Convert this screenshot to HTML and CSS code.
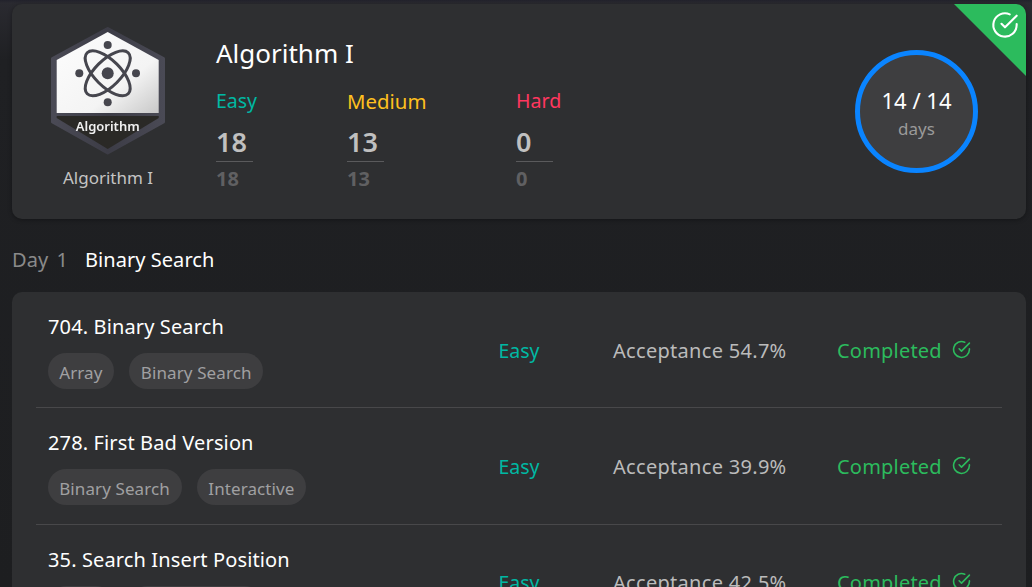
FILE: index.html
```html
<!DOCTYPE html>
<html lang="en">
<head>
<meta charset="utf-8">
<title>Algorithm I</title>
<link rel="stylesheet" href="styles.css">
</head>
<body>
<main class="page">
  <section class="hero">
    <div class="corner">
      <svg class="corner-check" viewBox="0 0 24 24"><path d="M22 11.08V12a10 10 0 1 1-5.93-9.14"/><path d="M22 4 12 14.01l-3-3"/></svg>
    </div>
    <div class="badge-col">
      <svg class="badge" viewBox="0 0 116 130">
        <defs>
          <linearGradient id="face" x1="0" y1="0" x2="1" y2="1"><stop offset="0" stop-color="#fdfdfd"/><stop offset="0.65" stop-color="#f4f4f4"/><stop offset="1" stop-color="#c8c8c8"/></linearGradient>
          <linearGradient id="rim" x1="0" y1="0" x2="1" y2="0"><stop offset="0" stop-color="#4a4a55"/><stop offset="0.5" stop-color="#3c3c46"/><stop offset="1" stop-color="#4a4a55"/></linearGradient>
        </defs>
        <path class="badge-rim" fill="url(#rim)" stroke="url(#rim)" d="M57.7 2.5 113.5 32.5v63.5L57.7 127 2.5 96V32.5z"/>
        <path class="badge-face" fill="url(#face)" d="M57.7 6 108.7 34v53H6.7V34z"/>
        <path class="badge-foot" d="M6.7 90h102v2L57.7 123 6.7 92z"/>
        <g class="atom">
          <ellipse cx="57.7" cy="47.3" rx="29" ry="13" transform="rotate(45 57.7 47.3)"/>
          <ellipse cx="57.7" cy="47.3" rx="29" ry="13" transform="rotate(-45 57.7 47.3)"/>
        </g>
        <g class="atom-dots">
          <circle cx="57.7" cy="47.3" r="6"/><circle cx="57.7" cy="19" r="4"/><circle cx="57.7" cy="76.3" r="4"/><circle cx="29.3" cy="47.3" r="4"/><circle cx="86" cy="47.3" r="4"/>
        </g>
        <text class="badge-text" x="57.7" y="105" text-anchor="middle">Algorithm</text>
      </svg>
      <div class="badge-name">Algorithm I</div>
    </div>
    <div class="summary">
      <h1 class="plan-title">Algorithm I</h1>
      <div class="levels">
        <div class="level">
          <div class="level-name easy">Easy</div>
          <div class="level-done">18</div>
          <div class="level-total">18</div>
        </div>
        <div class="level">
          <div class="level-name medium">Medium</div>
          <div class="level-done">13</div>
          <div class="level-total">13</div>
        </div>
        <div class="level">
          <div class="level-name hard">Hard</div>
          <div class="level-done">0</div>
          <div class="level-total">0</div>
        </div>
      </div>
    </div>
    <div class="ring">
      <div class="ring-count">14 / 14</div>
      <div class="ring-unit">days</div>
    </div>
  </section>

  <h2 class="day"><span class="day-num">Day 1</span><span class="day-topic">Binary Search</span></h2>

  <section class="list">
    <article class="row">
      <div class="row-main">
        <div class="row-title">704. Binary Search</div>
        <div class="tags"><span class="tag">Array</span><span class="tag">Binary Search</span></div>
      </div>
      <div class="row-level">Easy</div>
      <div class="row-acc">Acceptance 54.7%</div>
      <div class="row-status">Completed<svg class="status-check" viewBox="0 0 24 24"><path d="M22 11.08V12a10 10 0 1 1-5.93-9.14"/><path d="M22 4 12 14.01l-3-3"/></svg></div>
    </article>
    <article class="row">
      <div class="row-main">
        <div class="row-title">278. First Bad Version</div>
        <div class="tags"><span class="tag">Binary Search</span><span class="tag">Interactive</span></div>
      </div>
      <div class="row-level">Easy</div>
      <div class="row-acc">Acceptance 39.9%</div>
      <div class="row-status">Completed<svg class="status-check" viewBox="0 0 24 24"><path d="M22 11.08V12a10 10 0 1 1-5.93-9.14"/><path d="M22 4 12 14.01l-3-3"/></svg></div>
    </article>
    <article class="row">
      <div class="row-main">
        <div class="row-title">35. Search Insert Position</div>
        <div class="tags"><span class="tag">Array</span><span class="tag">Binary Search</span></div>
      </div>
      <div class="row-level">Easy</div>
      <div class="row-acc">Acceptance 42.5%</div>
      <div class="row-status">Completed<svg class="status-check" viewBox="0 0 24 24"><path d="M22 11.08V12a10 10 0 1 1-5.93-9.14"/><path d="M22 4 12 14.01l-3-3"/></svg></div>
    </article>
  </section>
</main>
</body>
</html>
```
FILE: styles.css
```css
* { box-sizing: border-box; }
html, body { margin: 0; height: 100%; overflow: hidden; }
body {
  background: linear-gradient(#22222c 0, #2a2a30 3px, #1f2023 60px, #1d1e20 100%);
  font-family: "Noto Sans", "Open Sans", sans-serif;
  color: #fff;
}
.page { padding: 4px 6px 0 12px; }
.hero {
  position: relative;
  display: flex;
  height: 215px;
  background: #2e2f31;
  border-radius: 10px;
  overflow: hidden;
  box-shadow: 0 1px 4px rgba(0,0,0,.35);
}
.corner {
  position: absolute;
  top: 0; right: 0;
  width: 72px; height: 72px;
  background: #2cbb5d;
  clip-path: polygon(0 0, 100% 0, 100% 100%);
}
.corner-check {
  position: absolute;
  top: 7px; right: 7px;
  width: 28px; height: 28px;
  fill: none; stroke: #fff; stroke-width: 1.8; stroke-linecap: round; stroke-linejoin: round;
}
.badge-col { width: 192px; padding: 22px 0 0 38px; }
.badge { display: block; width: 116px; height: 130px; filter: blur(.4px); }
.badge-rim { stroke-width: 3; stroke-linejoin: round; }
.badge-foot { fill: #2a2926; }
.atom { fill: none; stroke: #46464e; stroke-width: 3; }
.atom-dots { fill: #46464e; }
.badge-text { fill: #f0f0f0; font-size: 13px; font-weight: 600; font-family: "Noto Sans", sans-serif; }
.badge-name {
  margin-top: 10px;
  width: 116px;
  text-align: center;
  font-size: 17px;
  line-height: 24px;
  color: #c4c4c4;
}
.summary { flex: 1; padding: 30px 0 0 12px; }
.plan-title { margin: 0; font-size: 26px; font-weight: 400; line-height: 38px; }
.levels { display: grid; grid-template-columns: 131px 169px 1fr; margin-top: 15px; }
.level-name { line-height: 28px; }
.easy { font-size: 19.5px; color: #00b8a3; }
.medium { font-size: 20.4px; color: #ffc01e; }
.hard { font-size: 19.6px; color: #ff375f; }
.level-done {
  width: 37px;
  margin-top: 9px;
  padding-bottom: 1px;
  font-size: 27px;
  font-weight: 600;
  line-height: 36px;
  color: #c0c0c0;
  border-bottom: 1px solid #5a5a5c;
}
.level-total { font-size: 20px; font-weight: 700; line-height: 34px; color: #606062; }
.ring {
  align-self: flex-start;
  display: flex;
  flex-direction: column;
  align-items: center;
  justify-content: center;
  width: 123px; height: 123px;
  margin: 46px 48px 0 0;
  padding-top: 4px;
  border: 5px solid #0a84ff;
  border-radius: 50%;
  background: #3e3e40;
}
.ring-count { font-size: 22px; line-height: 28px; margin-bottom: 1px; }
.ring-unit { font-size: 17px; line-height: 27px; color: #9a9a9a; }
.day { display: flex; margin: 25px 0 0; height: 48px; font-size: 20px; font-weight: 400; line-height: 32px; letter-spacing: .05px; }
.day-num { width: 73px; color: #8a8a8a; word-spacing: 3px; }
.list { background: #2e2f31; border-radius: 10px; padding: 0 24px; }
.row {
  display: flex;
  align-items: center;
  height: 116.4px;
  border-bottom: 1px solid #48484a;
}
.row-main { width: 463px; padding: 19px 0 0 12px; align-self: flex-start; }
.row-title { font-size: 20px; line-height: 32px; letter-spacing: .13px; }
.tags { display: flex; gap: 15px; margin: 10px 0 0 -.5px; }
.tag {
  height: 36px;
  padding: 2px 11.7px 0;
  border-radius: 18px;
  background: #3e3e40;
  color: #a0a0a2;
  font-size: 17px;
  letter-spacing: .1px;
  line-height: 36px;
}
.row-level { width: 114px; padding-top: 1px; font-size: 19.5px; margin-left: -.5px; margin-right: .5px; color: #00b8a3; }
.row-acc { width: 224px; padding-top: 1px; font-size: 20px; letter-spacing: .3px; color: #bbb; white-space: nowrap; }
.row-status { display: flex; align-items: center; gap: 10px; padding-top: 1px; font-size: 20px; letter-spacing: .2px; color: #2cbb5d; }
.status-check {
  width: 19px; height: 19px;
  margin-top: -2px;
  fill: none; stroke: #2cbb5d; stroke-width: 2; stroke-linecap: round; stroke-linejoin: round;
}
```
